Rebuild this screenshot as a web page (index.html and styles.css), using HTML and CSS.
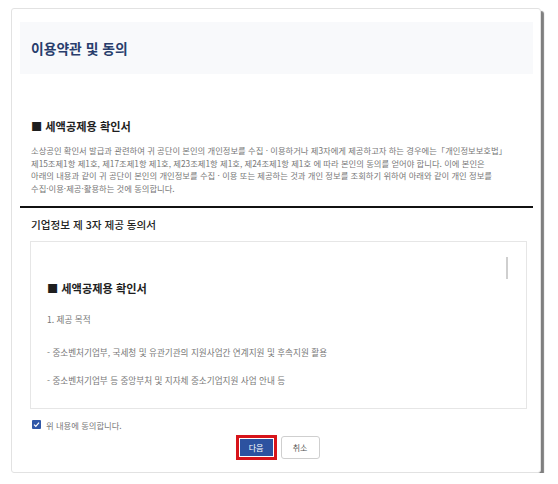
FILE: index.html
```html
<!DOCTYPE html>
<html lang="ko">
<head>
<meta charset="UTF-8">
<title>이용약관 및 동의</title>
<link rel="stylesheet" href="styles.css">
</head>
<body>
	<div class="fenetre">
		<div class="entete">
			<h1 class="titre">이용약관 및 동의</h1>
		</div>

		<div class="contenu">
			<h2 class="titre_section">■ 세액공제용 확인서</h2>
			<p class="texte_notice">소상공인 확인서 발급과 관련하여 귀 공단이 본인의 개인정보를 수집 · 이용하거나 제3자에게 제공하고자 하는 경우에는「개인정보보호법」<br>제15조제1항 제1호, 제17조제1항 제1호, 제23조제1항 제1호, 제24조제1항 제1호 에 따라 본인의 동의를 얻어야 합니다. 이에 본인은<br>아래의 내용과 같이 귀 공단이 본인의 개인정보를 수집 · 이용 또는 제공하는 것과 개인 정보를 조회하기 위하여 아래와 같이 개인 정보를<br>수집·이용·제공·활용하는 것에 동의합니다.</p>

			<div class="separateur"></div>

			<h3 class="titre_accord">기업정보 제 3자 제공 동의서</h3>

			<div class="boite_accord">
				<span class="barre_defilement"></span>
				<h4 class="titre_boite">■ 세액공제용 확인서</h4>
				<p class="ligne_boite premiere">1. 제공 목적</p>
				<p class="ligne_boite deuxieme">- 중소벤처기업부, 국세청 및 유관기관의 지원사업간 연계지원 및 후속지원 활용</p>
				<p class="ligne_boite troisieme">- 중소벤처기업부 등 중앙부처 및 지자체 중소기업지원 사업 안내 등</p>
			</div>

			<label class="case_accord">
				<span class="case">
					<svg width="9" height="9" viewBox="0 0 9 9"><path d="M2 4.6 L3.8 6.3 L7 2.7" fill="none" stroke="#fff" stroke-width="1.2"/></svg>
				</span>
				위 내용에 동의합니다.
			</label>

			<div class="boutons">
				<button class="bouton suivant">다음</button>
				<button class="bouton annuler">취소</button>
			</div>
		</div>
	</div>
</body>
</html>
```

FILE: styles.css
```css
html, body
{
	margin : 0;
	padding : 0;
	background : #fff;
}

body
{
	font-family : "Noto Sans CJK KR", "Noto Sans", sans-serif;
	color : #222;
}

div.fenetre
{
	box-sizing : border-box;
	width : 530px;
	height : 465px;
	margin : 8px 0 0 11px;
	padding : 13px 7px 0 8px;
	background : #fff;
	border : 1px solid #e2e2e2;
	border-radius : 3px;
	box-shadow : 3px 3px 1px rgba(0,0,0,0.5);
}

div.entete
{
	height : 52px;
	padding-left : 11px;
	display : flex;
	align-items : center;
	background : #f8f9fb;
}

h1.titre
{
	margin : 0;
	font-size : 13.8px;
	font-weight : 700;
	color : #283d6c;
	line-height : 18px;
}

div.contenu
{
	padding : 0 11px;
}

h2.titre_section
{
	margin : 43px 0 0 0;
	font-size : 11.2px;
	font-weight : 700;
	line-height : 18px;
	color : #1e1e1e;
}

p.texte_notice
{
	margin : 9px 0 0 0;
	font-size : 8.3px;
	line-height : 12.7px;
	color : #777;
	white-space : nowrap;
}

div.separateur
{
	height : 2px;
	margin : 11px -11px 0 -11px;
	background : #111;
}

h3.titre_accord
{
	margin : 8px 0 0 0;
	font-size : 10.6px;
	font-weight : 500;
	line-height : 18px;
	color : #222;
}

div.boite_accord
{
	position : relative;
	box-sizing : border-box;
	height : 168px;
	margin : 7px -5px 0 -1px;
	padding : 38px 16px 0 16px;
	border : 1px solid #e6e6e6;
}

span.barre_defilement
{
	position : absolute;
	left : 475px;
	top : 15px;
	width : 2px;
	height : 22px;
	background : #cfcfcf;
}

h4.titre_boite
{
	margin : 0;
	font-size : 11.2px;
	font-weight : 700;
	line-height : 16px;
	color : #1e1e1e;
}

p.ligne_boite
{
	margin : 0;
	font-size : 8.6px;
	line-height : 14px;
	color : #777;
	white-space : nowrap;
}

p.premiere { margin-top : 16px; }
p.deuxieme { margin-top : 19px; }
p.troisieme { margin-top : 14px; }

label.case_accord
{
	display : flex;
	align-items : center;
	gap : 5px;
	margin : 9px 0 0 1px;
	height : 14px;
	font-size : 8.3px;
	color : #777;
}

span.case
{
	display : block;
	width : 9px;
	height : 9px;
	background : #2f57a8;
	border-radius : 1px;
}

span.case svg
{
	display : block;
}

div.boutons
{
	display : flex;
	justify-content : center;
	align-items : center;
	gap : 8px;
	margin-top : 3px;
	height : 25px;
	padding-left : 6px;
}

button.bouton
{
	font-family : "Noto Sans CJK KR", sans-serif;
	font-size : 8px;
	padding : 0;
	cursor : pointer;
}

button.suivant
{
	width : 33px;
	height : 17px;
	background : #2c52a0;
	color : #fff;
	border : none;
	border-radius : 0;
	outline : 3px solid #d7141a;
	outline-offset : 1px;
}

button.annuler
{
	width : 39px;
	height : 23px;
	background : #fff;
	color : #555;
	border : 1px solid #cfcfcf;
	border-radius : 3px;
}
```
